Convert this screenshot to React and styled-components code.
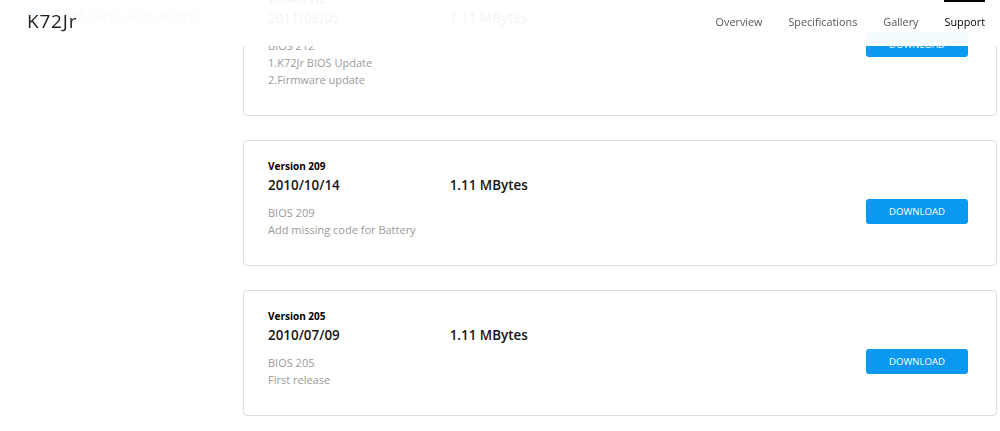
import React from "react";
import styled, { createGlobalStyle } from "styled-components";

const Global = createGlobalStyle`
  html, body { margin: 0; padding: 0; overflow: hidden; background: #fff; }
  body { font-family: "Open Sans", "Noto Sans", sans-serif; }
  * { box-sizing: border-box; }
`;

const Header = styled.header`
  position: fixed;
  top: 0;
  left: 0;
  right: 0;
  height: 46px;
  padding: 0 15px 4px 27px;
  display: flex;
  align-items: center;
  justify-content: space-between;
  background: rgba(255, 255, 255, 0.955);
  z-index: 10;
`;

const Brand = styled.div`
  font-size: 19px;
  letter-spacing: 0.8px;
  color: #222;
  line-height: 1;
`;

const Nav = styled.nav`
  display: flex;
  align-self: stretch;
  gap: 26px;
`;

const NavItem = styled.a`
  display: flex;
  align-items: center;
  font-size: 10.8px;
  color: ${(p) => (p.$active ? "#000" : "#555")};
  text-decoration: none;
  box-shadow: ${(p) => (p.$active ? "inset 0 2px 0 #000" : "none")};
`;

const Main = styled.main`
  display: grid;
  grid-template-columns: 243px 1fr;
  margin-top: -27px;
  padding-right: 3px;
`;

const Aside = styled.aside`
  padding: 33px 0 0 27px;
`;

const ServiceLink = styled.a`
  display: flex;
  align-items: center;
  gap: 10px;
  font-size: 14.5px;
  color: #0a95ef;
  text-decoration: none;
  line-height: 20px;
`;

const List = styled.div`
  display: flex;
  flex-direction: column;
  gap: 24px;
`;

const Card = styled.div`
  display: flex;
  justify-content: space-between;
  align-items: flex-start;
  border: 1px solid #dedede;
  border-radius: 4px;
  padding: 17px 28px 27px 24px;
  background: #fff;
`;

const Info = styled.div`
  display: flex;
  flex-direction: column;
`;

const Version = styled.div`
  font-size: 10px;
  font-weight: 700;
  line-height: 16px;
  color: #000;
`;

const MetaRow = styled.div`
  display: flex;
  line-height: 22px;
  font-size: 13.4px;
  font-weight: 600;
  color: #151515;
`;

const Size = styled.span`
  margin-left: 110px;
`;

const Desc = styled.div`
  margin-top: 8px;
  font-size: 11px;
  line-height: 17px;
  color: #9b9b9b;
`;

const Button = styled.button`
  margin-top: 41px;
  width: 102px;
  height: 25px;
  border: none;
  border-radius: 3px;
  background: #0b98f0;
  color: #fff;
  font-family: "Open Sans", "Noto Sans", sans-serif;
  font-size: 9.6px;
  padding: 0;
  cursor: pointer;
`;

const PinIcon = () => (
  <svg width="18" height="18" viewBox="0 0 24 24" fill="none" stroke="currentColor" strokeWidth="2">
    <circle cx="12" cy="12" r="10" />
    <circle cx="12" cy="12" r="3" />
  </svg>
);

const items = [
  { v: "212", date: "2011/08/05", size: "1.11 MBytes", desc: ["BIOS 212", "1.K72Jr BIOS Update", "2.Firmware update"] },
  { v: "209", date: "2010/10/14", size: "1.11 MBytes", desc: ["BIOS 209", "Add missing code for Battery"] },
  { v: "205", date: "2010/07/09", size: "1.11 MBytes", desc: ["BIOS 205", "First release"] },
  { v: "204", date: "2010/06/21", size: "1.11 MBytes", desc: ["BIOS 204", "Initial version"] },
];

export default function App() {
  return (
    <>
      <Global />
      <Header>
        <Brand>K72Jr</Brand>
        <Nav>
          <NavItem>Overview</NavItem>
          <NavItem>Specifications</NavItem>
          <NavItem>Gallery</NavItem>
          <NavItem $active>Support</NavItem>
        </Nav>
      </Header>
      <Main>
        <Aside>
          <ServiceLink>
            <PinIcon />
            Find service locations
          </ServiceLink>
        </Aside>
        <List>
          {items.map((it) => (
            <Card key={it.v}>
              <Info>
                <Version>Version {it.v}</Version>
                <MetaRow>
                  <span>{it.date}</span>
                  <Size>{it.size}</Size>
                </MetaRow>
                <Desc>
                  {it.desc.map((d) => (
                    <div key={d}>{d}</div>
                  ))}
                </Desc>
              </Info>
              <Button>DOWNLOAD</Button>
            </Card>
          ))}
        </List>
      </Main>
    </>
  );
}
